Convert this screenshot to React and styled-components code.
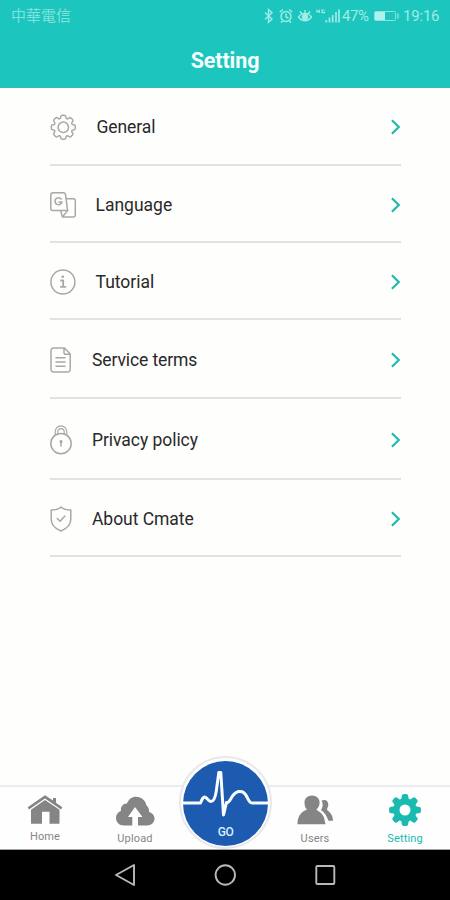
import React from "react";
import styled, { createGlobalStyle } from "styled-components";

const TEAL = "#1cc5bd";

const GlobalStyle = createGlobalStyle`
  * { box-sizing: border-box; }
  body { margin: 0; background: #fefefc; font-family: Roboto, "Noto Sans CJK TC", sans-serif; }
  svg { display: block; flex: none; overflow: visible; }
`;

const Screen = styled.div`
  width: 450px;
  height: 900px;
  display: flex;
  flex-direction: column;
  overflow: hidden;
  background: #fefefc;
`;

const Header = styled.header`
  height: 88px;
  flex: none;
  background: ${TEAL};
  border-bottom: 1px solid #3bb9b3;
`;

const StatusBar = styled.div`
  height: 32px;
  padding: 0 10px 0 11px;
  display: flex;
  align-items: center;
  justify-content: space-between;
  color: #a0ece6;
`;

const Carrier = styled.span`
  font-size: 15px;
  line-height: 20px;
  color: #80e2dc;
`;

const StatusIcons = styled.div`
  display: flex;
  align-items: center;
  font-size: 15px;
  line-height: 20px;
`;

const Percent = styled.span`
  width: 27px;
  margin: 0 5px 0 2px;
  letter-spacing: -0.4px;
  white-space: nowrap;
`;

const Clock = styled.span`
  width: 37px;
  margin-left: 4px;
  letter-spacing: -0.2px;
  white-space: nowrap;
`;

const Title = styled.h1`
  margin: 16px 0 0;
  text-align: center;
  font-size: 21.5px;
  line-height: 25px;
  font-weight: 700;
  letter-spacing: -0.1px;
  color: #f4fffe;
`;

const List = styled.main`
  flex: 1;
  padding: 0 49px 0 50px;
`;

const Row = styled.div`
  height: ${(p) => p.$height}px;
  padding-top: ${(p) => p.$top}px;
  display: flex;
  align-items: center;
  border-bottom: 2px solid #e1e2e5;
`;

const IconSlot = styled.span`
  width: ${(p) => p.$width}px;
  flex: none;
`;

const Label = styled.span`
  flex: 1;
  font-size: 17.5px;
  line-height: 22px;
  letter-spacing: ${(p) => p.$spacing}px;
  color: #292929;
`;

const TabBar = styled.nav`
  height: 65px;
  flex: none;
  display: grid;
  grid-template-columns: repeat(5, 90px);
  border-top: 2px solid #ededee;
  border-bottom: 1px solid #a5a5a5;
  background: #fefefe;
`;

const Tab = styled.div`
  display: flex;
  flex-direction: column;
  align-items: center;
  padding-top: ${(p) => p.$top}px;
  color: ${(p) => (p.$active ? "#19bab0" : "#858585")};
`;

const TabLabel = styled.span`
  margin-top: ${(p) => p.$gap}px;
  font-size: 11px;
  line-height: 14px;
  letter-spacing: 0.15px;
`;

const GoButton = styled.div`
  width: 93px;
  height: 93px;
  margin: -31px 0 0 1px;
  justify-self: center;
  position: relative;
  border-radius: 50%;
  border: 2px solid #e9e9ec;
  background: #fefefe;
  padding: 2.5px 2px 2px;
  z-index: 1;
`;

const GoDisc = styled.div`
  width: 85px;
  height: 85px;
  border-radius: 50%;
  background: #1c5bb0;
  display: flex;
  flex-direction: column;
  align-items: center;
`;

const GoLabel = styled.span`
  margin-top: 7px;
  font-size: 12px;
  line-height: 14px;
  font-weight: 500;
  letter-spacing: -0.4px;
  color: #d6f0ff;
`;

const SystemBar = styled.footer`
  height: 50px;
  flex: none;
  padding: 0 75px;
  display: grid;
  grid-template-columns: repeat(3, 100px);
  place-items: center;
  background: #000;
`;

// Eight-toothed cog outline with softened corners, centred on (c, c).
function cogPath(c, outer, inner) {
  const points = [];
  for (let i = 0; i < 8; i++) {
    [[-0.32, inner], [-0.2, outer], [0.2, outer], [0.32, inner]].forEach(([offset, r]) => {
      const a = (i * Math.PI) / 4 + offset * 0.95;
      points.push([c + r * Math.sin(a), c - r * Math.cos(a)]);
    });
  }
  const mid = (a, b, t) => [a[0] + (b[0] - a[0]) * t, a[1] + (b[1] - a[1]) * t];
  const f = (p) => p.map((n) => n.toFixed(2)).join(" ");
  return (
    points
      .map((p, i) => {
        const prev = points[(i + 31) % 32];
        const next = points[(i + 1) % 32];
        return `${i ? "L" : "M"}${f(mid(p, prev, 0.35))}Q${f(p)} ${f(mid(p, next, 0.35))}`;
      })
      .join("") + "Z"
  );
}

const Outline = ({ w, h, children }) => (
  <svg width={w} height={h} viewBox={`0 0 ${w} ${h}`} fill="none" stroke="#a8a8a8" strokeWidth="1.5" strokeLinecap="round" strokeLinejoin="round">
    {children}
  </svg>
);

const GeneralIcon = () => (
  <Outline w={27} h={26}>
    <path d={cogPath(13.3, 12.2, 9.3)} />
    <circle cx="13.3" cy="13.3" r="5.2" />
  </Outline>
);

const LanguageIcon = () => (
  <Outline w={27} h={26}>
    <path d="M2.800 .8h10.700a2 2 0 0 1 2 1.600L17.600 18.500H2.800a2 2 0 0 1-2-2V2.800a2 2 0 0 1 2-2Z" />
    <path d="M16.500 6.700h6.800a2 2 0 0 1 2 2v14.400a2 2 0 0 1-2 2H12.500L10.800 19M12.500 25l5-6.400" />
    <path d="M11.200 7A3.500 3.500 0 1 0 11.900 10H9" strokeWidth="1.600" />
  </Outline>
);

const TutorialIcon = () => (
  <Outline w={27} h={26}>
    <circle cx="12.9" cy="13" r="12" />
    <path d="M11 11.5h2.200v6M10.800 17.800h4.600" strokeWidth="1.8" />
    <circle cx="12.8" cy="7.8" r="1.3" fill="#a3a3a3" stroke="none" />
  </Outline>
);

const TermsIcon = () => (
  <Outline w={22} h={26}>
    <path d="M3.5 1h11L20.200 7v15.500a2.500 2.500 0 0 1-2.500 2.500H3.500A2.500 2.500 0 0 1 1 22.500v-19A2.500 2.500 0 0 1 3.500 1ZM14 1v4.500A1.800 1.800 0 0 0 15.800 7.300h4.400M6 10.700h9M6 15h9M6 19.200h9" />
  </Outline>
);

const PrivacyIcon = () => (
  <Outline w={22} h={30}>
    <circle cx="11" cy="18.6" r="10.2" />
    <path d="M5.200 10.400V6.700a5.800 5.800 0 0 1 11.600 0v3.700M7.800 9V6.800a3.200 3.200 0 0 1 6.400 0V9" strokeWidth="1.2" />
    <path d="M11 17.500v3.500" />
    <circle cx="11" cy="16.600" r="1.500" fill="#a3a3a3" stroke="none" />
  </Outline>
);

const AboutIcon = () => (
  <Outline w={22} h={26}>
    <path d="M11 1C8.500 3.300 5 4.200 1.200 4v9c0 6 4.300 9.800 9.800 12 5.500-2.200 9.800-6 9.800-12V4C17 4.200 13.500 3.300 11 1Z" />
    <path d="m7.200 12.500 2.900 2.800 4.800-5.300" />
  </Outline>
);

const Chevron = () => (
  <svg width="12" height="16" viewBox="0 0 12 16" fill="none" stroke="#22b9ac" strokeWidth="2.200">
    <path d="m2.900 1.300 6.900 6.700-6.900 6.700" />
  </svg>
);

const StatusGlyphs = () => (
  <svg width="77" height="18" viewBox="0 0 77 18" fill="none" stroke="#a0ece6" strokeWidth="1.4">
    <path d="m2 5.500 7 6.500-3.500 3.300V2.500L9 5.700l-7 6.500" />
    <circle cx="23" cy="9.500" r="5" />
    <path d="M23 6.500v3.500l2.500 1M16.800 5.300l3-2.800M29.200 5.300l-3-2.800M19.500 14l-1.500 1.800M26.500 14l1.500 1.800" />
    <path d="M35.500 10c3.500-4.800 9.500-4.800 13 0-3.500 5-9.500 5-13 0ZM37 4.500l2 2.500M42 3v3M47 4.500l-2 2.500" />
    <circle cx="42" cy="10" r="2.500" fill="#a0ece6" />
    <path d="M56.300 2.500v3.500M53.800 2.500v2.200h2.500M61.500 3h-2.500v2.600h2.500V4.400" strokeWidth="1.200" />
    <path d="M63.300 15.500v-2.500M66.500 15.500V10.500M69.700 15.500V8M73 15.500V5M76 15.500V2.500" strokeWidth="1.700" />
  </svg>
);

const Battery = () => (
  <svg width="25" height="12" viewBox="0 0 25 12" fill="none" stroke="#8be5de" strokeWidth="1">
    <rect x=".5" y="1.500" width="21" height="9" rx="1" />
    <path d="M1 2h10v8H1Z" fill="#aef2ed" stroke="none" />
    <path d="M24 3.500v5" strokeWidth="1.500" />
  </svg>
);

const HomeIcon = () => (
  <svg width="36" height="30" viewBox="0 0 36 30" fill="currentColor">
    <path d="M18 .2 26 5.600V3h3v4.700l6.300 4.500-1.300 2.300L18 3.500 2 14.500.7 12.200Z" />
    <path d="M18 5 32.500 14.700v14.100h-10v-12h-7.500v12H4V14.700Z" />
  </svg>
);

const UploadIcon = () => (
  <svg width="40" height="30" viewBox="0 0 40 30" fill="currentColor">
    <path fillRule="evenodd" d="M9 29.500C4 29.500 1 26 1 22c0-3.300 2-6 5-7.200-.8-4 2.500-7.500 6-7.200C13.500 3.300 17 .8 21 .8c5.700 0 9.800 4.200 10.500 8.700 2 1.500 2.800 4 2.500 6.500 3 .8 5.500 3.200 5.500 6.500 0 4-3.200 7-7.500 7h-9V21H27.500L20 11l-7 10h4.300v8.500Z" />
  </svg>
);

const UsersIcon = () => (
  <svg width="38" height="30" viewBox="0 0 38 30" fill="currentColor">
    <path d="M16 .5c4.500 0 7.600 3 7.600 7 0 3.200-1.400 5.300-3 6.800.2 2 5.500 2.800 7.400 8.200l1.500 6.700H1.500c.2-7.300 2.200-11.500 9.500-14.700C9.300 13 8.500 10.700 8.500 7.500c0-4 3-7 7.500-7Z" />
    <path d="M25.500 5.500c4.500-2 7.500 1.300 6.700 5.300-.3 1.600-1.100 2.700-1.200 4 3.500 3 6 6 6 11h-4.500C30.500 20.500 28.500 17.500 25 15c2-3 2.300-6.500.5-9.500Z" />
  </svg>
);

const SettingIcon = () => (
  <svg width="32" height="32" viewBox="0 0 32 32" fill="currentColor" fillRule="evenodd">
    <path d={cogPath(16, 16.2, 11.7) + "M16 10.500a5.500 5.500 0 1 0 0 11 5.500 5.500 0 0 0 0-11Z"} />
  </svg>
);

const Heartbeat = () => (
  <svg width="85" height="57" viewBox="0 0 85 57" fill="none" stroke="#fafeff" strokeWidth="3" strokeLinejoin="round">
    <path d="M0 42h17.500c1.500-4 3-6.700 5-5.700 2 .8 2.500 4 5.300 4.200 3.500 0 4.700-5 5.500-10.500l2.500-18.500h2l2.700 42.500 3-12.500c1 .5 2.500-.5 4-3.200 4.500-9 12-10.500 16-3.300 1.500 3 2.700 7 5.500 7H85" />
  </svg>
);

const NavGlyph = ({ children }) => (
  <svg width="22" height="22" viewBox="0 0 22 22" fill="none" stroke="#b9b9b9" strokeWidth="1.900" strokeLinejoin="round">
    {children}
  </svg>
);

const rows = [
  { label: "General", icon: GeneralIcon, slot: 46.5, height: 78, spacing: -0.1, top: 1 },
  { label: "Language", icon: LanguageIcon, slot: 45.5, height: 77, spacing: 0, top: 2 },
  { label: "Tutorial", icon: TutorialIcon, slot: 45.5, height: 77, spacing: 0, top: 3 },
  { label: "Service terms", icon: TermsIcon, slot: 42, height: 79, spacing: -0.1, top: 3 },
  { label: "Privacy policy", icon: PrivacyIcon, slot: 42, height: 81, spacing: -0.05, top: 3 },
  { label: "About Cmate", icon: AboutIcon, slot: 42, height: 77, spacing: -0.05, top: 2 },
];

const BottomTab = ({ label, icon: Icon, top, gap, active }) => (
  <Tab $top={top} $active={active}>
    <Icon />
    <TabLabel $gap={gap}>{label}</TabLabel>
  </Tab>
);

export default function App() {
  return (
    <Screen>
      <GlobalStyle />
      <Header>
        <StatusBar>
          <Carrier>中華電信</Carrier>
          <StatusIcons>
            <StatusGlyphs />
            <Percent>47%</Percent>
            <Battery />
            <Clock>19:16</Clock>
          </StatusIcons>
        </StatusBar>
        <Title>Setting</Title>
      </Header>
      <List>
        {rows.map(({ label, icon: Icon, slot, height, spacing, top }) => (
          <Row key={label} $height={height} $top={top}>
            <IconSlot $width={slot}>
              <Icon />
            </IconSlot>
            <Label $spacing={spacing}>{label}</Label>
            <Chevron />
          </Row>
        ))}
      </List>
      <TabBar>
        <BottomTab label="Home" icon={HomeIcon} top={8} gap={5} />
        <BottomTab label="Upload" icon={UploadIcon} top={9} gap={6} />
        <GoButton>
          <GoDisc>
            <Heartbeat />
            <GoLabel>GO</GoLabel>
          </GoDisc>
        </GoButton>
        <BottomTab label="Users" icon={UsersIcon} top={8} gap={7} />
        <BottomTab label="Setting" icon={SettingIcon} top={7} gap={6} active />
      </TabBar>
      <SystemBar>
        <NavGlyph>
          <path d="M20 1v20L2 11Z" />
        </NavGlyph>
        <NavGlyph>
          <circle cx="11.300" cy="11" r="9.700" />
        </NavGlyph>
        <NavGlyph>
          <rect x="2.300" y="2" width="18" height="18" rx="1" />
        </NavGlyph>
      </SystemBar>
    </Screen>
  );
}
